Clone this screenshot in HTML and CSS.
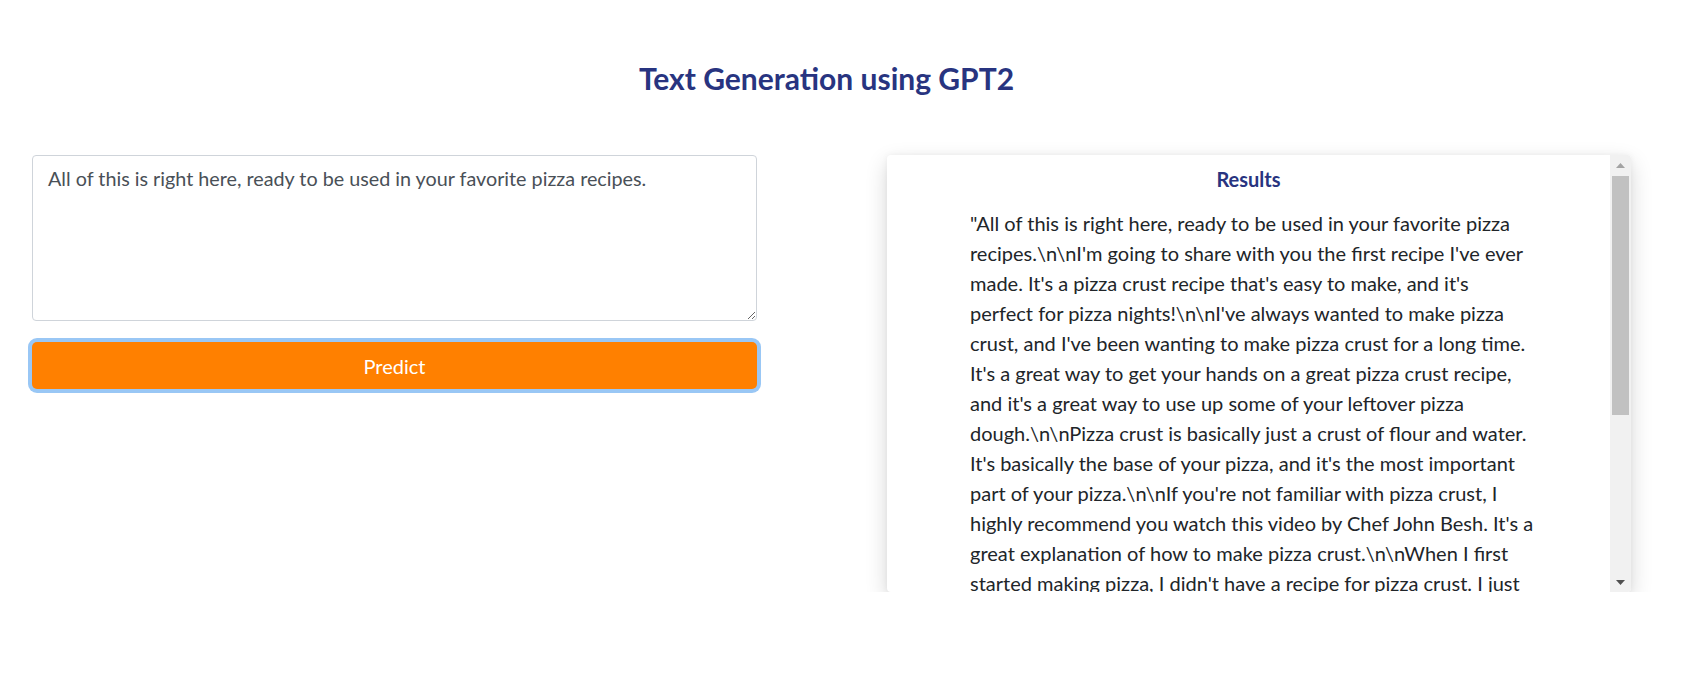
FILE: index.html
```html
<!DOCTYPE html>
<html lang="en">
<head>
<meta charset="utf-8">
<title>Text Generation using GPT2</title>
<link rel="stylesheet" href="styles.css">
</head>
<body>
<div class="page">
  <h1 class="title">Text Generation using GPT2</h1>
  <div class="main">
    <form class="input-col">
      <textarea class="prompt">All of this is right here, ready to be used in your favorite pizza recipes.</textarea>
      <button type="button" class="predict">Predict</button>
    </form>
    <section class="results">
      <div class="results-body">
        <h2 class="results-title">Results</h2>
        <p class="results-text">"All of this is right here, ready to be used in your favorite pizza recipes.\n\nI'm going to share with you the first recipe I've ever made. It's a pizza crust recipe that's easy to make, and it's perfect for pizza nights!\n\nI've always wanted to make pizza crust, and I've been wanting to make pizza crust for a long time. It's a great way to get your hands on a great pizza crust recipe, and it's a great way to use up some of your leftover pizza dough.\n\nPizza crust is basically just a crust of flour and water. It's basically the base of your pizza, and it's the most important part of your pizza.\n\nIf you're not familiar with pizza crust, I highly recommend you watch this video by Chef John Besh. It's a great explanation of how to make pizza crust.\n\nWhen I first started making pizza, I didn't have a recipe for pizza crust. I just used whatever I had in the pantry, and it always came out a little too thick or a little too thin.\n\nThen I found this recipe, and it changed everything. The crust is crispy on the outside and soft on the inside, and it holds up to all of your favorite toppings.\n\nSo grab some flour, some water, and a little bit of yeast, and let's get started making the best pizza crust you've ever had!"</p>
      </div>
      <div class="scrollbar" aria-hidden="true">
        <div class="sb-btn">
          <svg width="9" height="5" viewBox="0 0 9 5"><polygon points="0,5 9,5 4.5,0" fill="#a3a3a3"/></svg>
        </div>
        <div class="sb-track">
          <div class="sb-thumb"></div>
        </div>
        <div class="sb-btn">
          <svg width="9" height="5" viewBox="0 0 9 5"><polygon points="0,0 9,0 4.5,5" fill="#505050"/></svg>
        </div>
      </div>
    </section>
  </div>
</div>
</body>
</html>
```
FILE: styles.css
```css
html, body {
  margin: 0;
  padding: 0;
  background: #ffffff;
}

body {
  font-family: Lato, "Open Sans", "Liberation Sans", sans-serif;
  color: #212529;
}

.page {
  padding: 60px 77px 0 32px;
}

.title {
  margin: 0 0 59px;
  padding-right: 10px;
  font-size: 30px;
  line-height: 1.2;
  font-weight: 700;
  text-align: center;
  color: #283480;
}

.main {
  display: grid;
  grid-template-columns: 725px 744px;
  column-gap: 130px;
  align-items: start;
}

.input-col {
  display: flex;
  flex-direction: column;
  gap: 21px;
  margin: 0;
}

.prompt {
  box-sizing: border-box;
  width: 100%;
  height: 166px;
  margin: 0;
  padding: 8px 15px;
  border: 1px solid #cfd4da;
  border-radius: 4px;
  font-family: inherit;
  font-size: 19.75px;
  line-height: 1.5;
  color: #495057;
  background: #fff;
  resize: vertical;
  outline: none;
}

.predict {
  height: 47px;
  margin: 0;
  border: none;
  border-radius: 5px;
  background: #ff8000;
  color: #ffffff;
  font-family: inherit;
  font-size: 20px;
  box-shadow: 0 0 0 4px #99c7f5;
  cursor: pointer;
}

.results {
  display: flex;
  height: 437px;
  background: #ffffff;
  border-radius: 4px;
  box-shadow: 0 8px 22px rgba(0, 0, 0, 0.16), 0 0 6px rgba(0, 0, 0, 0.05);
  overflow: hidden;
}

.results-body {
  flex: 1;
  min-width: 0;
  overflow: hidden;
  padding-top: 12px;
}

.results-title {
  margin: 0 0 17px;
  font-size: 20px;
  line-height: 1.2;
  font-weight: 700;
  text-align: center;
  color: #283480;
}

.results-text {
  margin: 0 0 20px;
  padding-left: 83px;
  width: 565px;
  font-size: 20px;
  line-height: 1.5;
  color: #212529;
}

.scrollbar {
  width: 21px;
  flex: 0 0 21px;
  display: flex;
  flex-direction: column;
  background: #f1f1f1;
}

.sb-btn {
  height: 20px;
  display: flex;
  align-items: center;
  justify-content: center;
}

.sb-btn svg {
  display: block;
}

.sb-track {
  flex: 1;
  padding: 1px 2px 0;
}

.sb-thumb {
  height: 239px;
  background: #c1c1c1;
}
```
